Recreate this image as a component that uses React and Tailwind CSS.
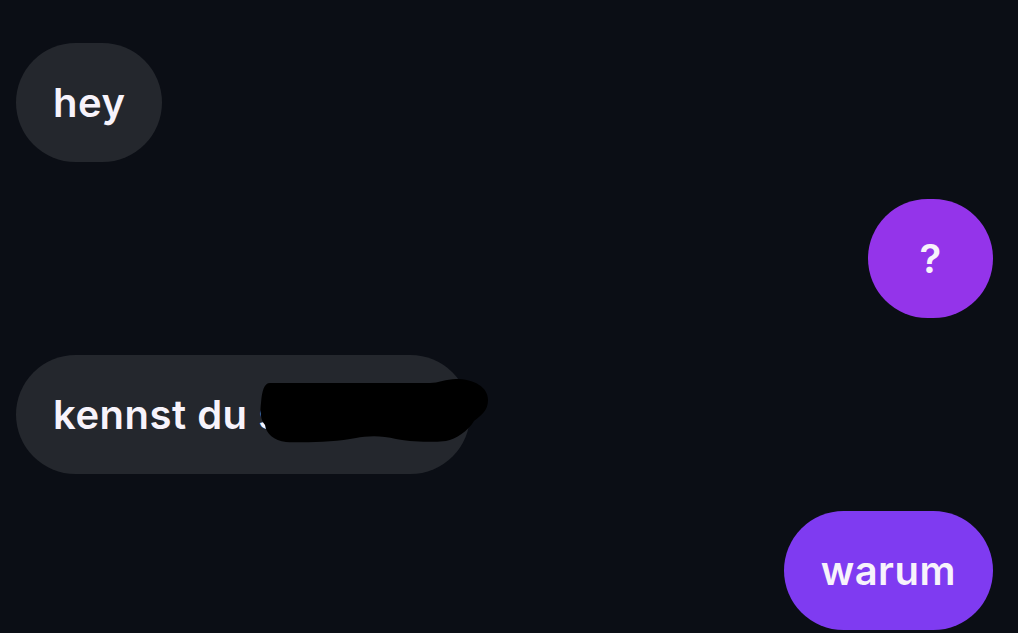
import React from "react";

const messages = [
  { id: 1, text: "hey", mine: false },
  { id: 2, text: "?", mine: true, tone: "bg-[#9434ea]" },
  { id: 3, text: "kennst du s", mine: false, redacted: true },
  { id: 4, text: "warum", mine: true, tone: "bg-[#7f3bf1]" },
];

function Scribble() {
  // marker redaction drawn over the message
  return (
    <svg
      className="absolute left-[240px] top-[20px] pointer-events-none"
      width="240"
      height="80"
      viewBox="0 0 240 80"
    >
      <path
        d="M14 8 L174 8 C182 8 190 4 200 4 C218 4 232 12 232 25 C232 35 226 40 218 46 C212 56 200 64 190 66 C170 68 150 66 140 64 C125 60 110 61 100 63 C80 67 50 68 30 67 C18 66 10 58 9 50 C4 44 4 36 5 28 C6 16 8 8 14 8 Z"
        fill="#000"
      />
    </svg>
  );
}

export default function App() {
  return (
    <div
      className="w-full min-h-screen bg-[#0b0e15] px-4 pt-[43px] flex flex-col gap-[37px]"
      style={{ fontFamily: "Inter, 'Noto Sans', sans-serif" }}
    >
      {messages.map((m) => (
        <div key={m.id} className={`flex ${m.mine ? "justify-end pr-[9px]" : "justify-start"}`}>
          <div
            className={`relative h-[119px] min-w-[125px] rounded-[60px] flex items-center justify-center px-[37px] text-[40px] font-semibold text-[#f7f3fb] tracking-[0.5px] ${
              m.mine ? m.tone : "bg-[#24272d]"
            } ${m.redacted ? "w-[454px] justify-start" : ""}`}
          >
            <span>{m.text}</span>
            {m.redacted && <Scribble />}
          </div>
        </div>
      ))}
    </div>
  );
}
